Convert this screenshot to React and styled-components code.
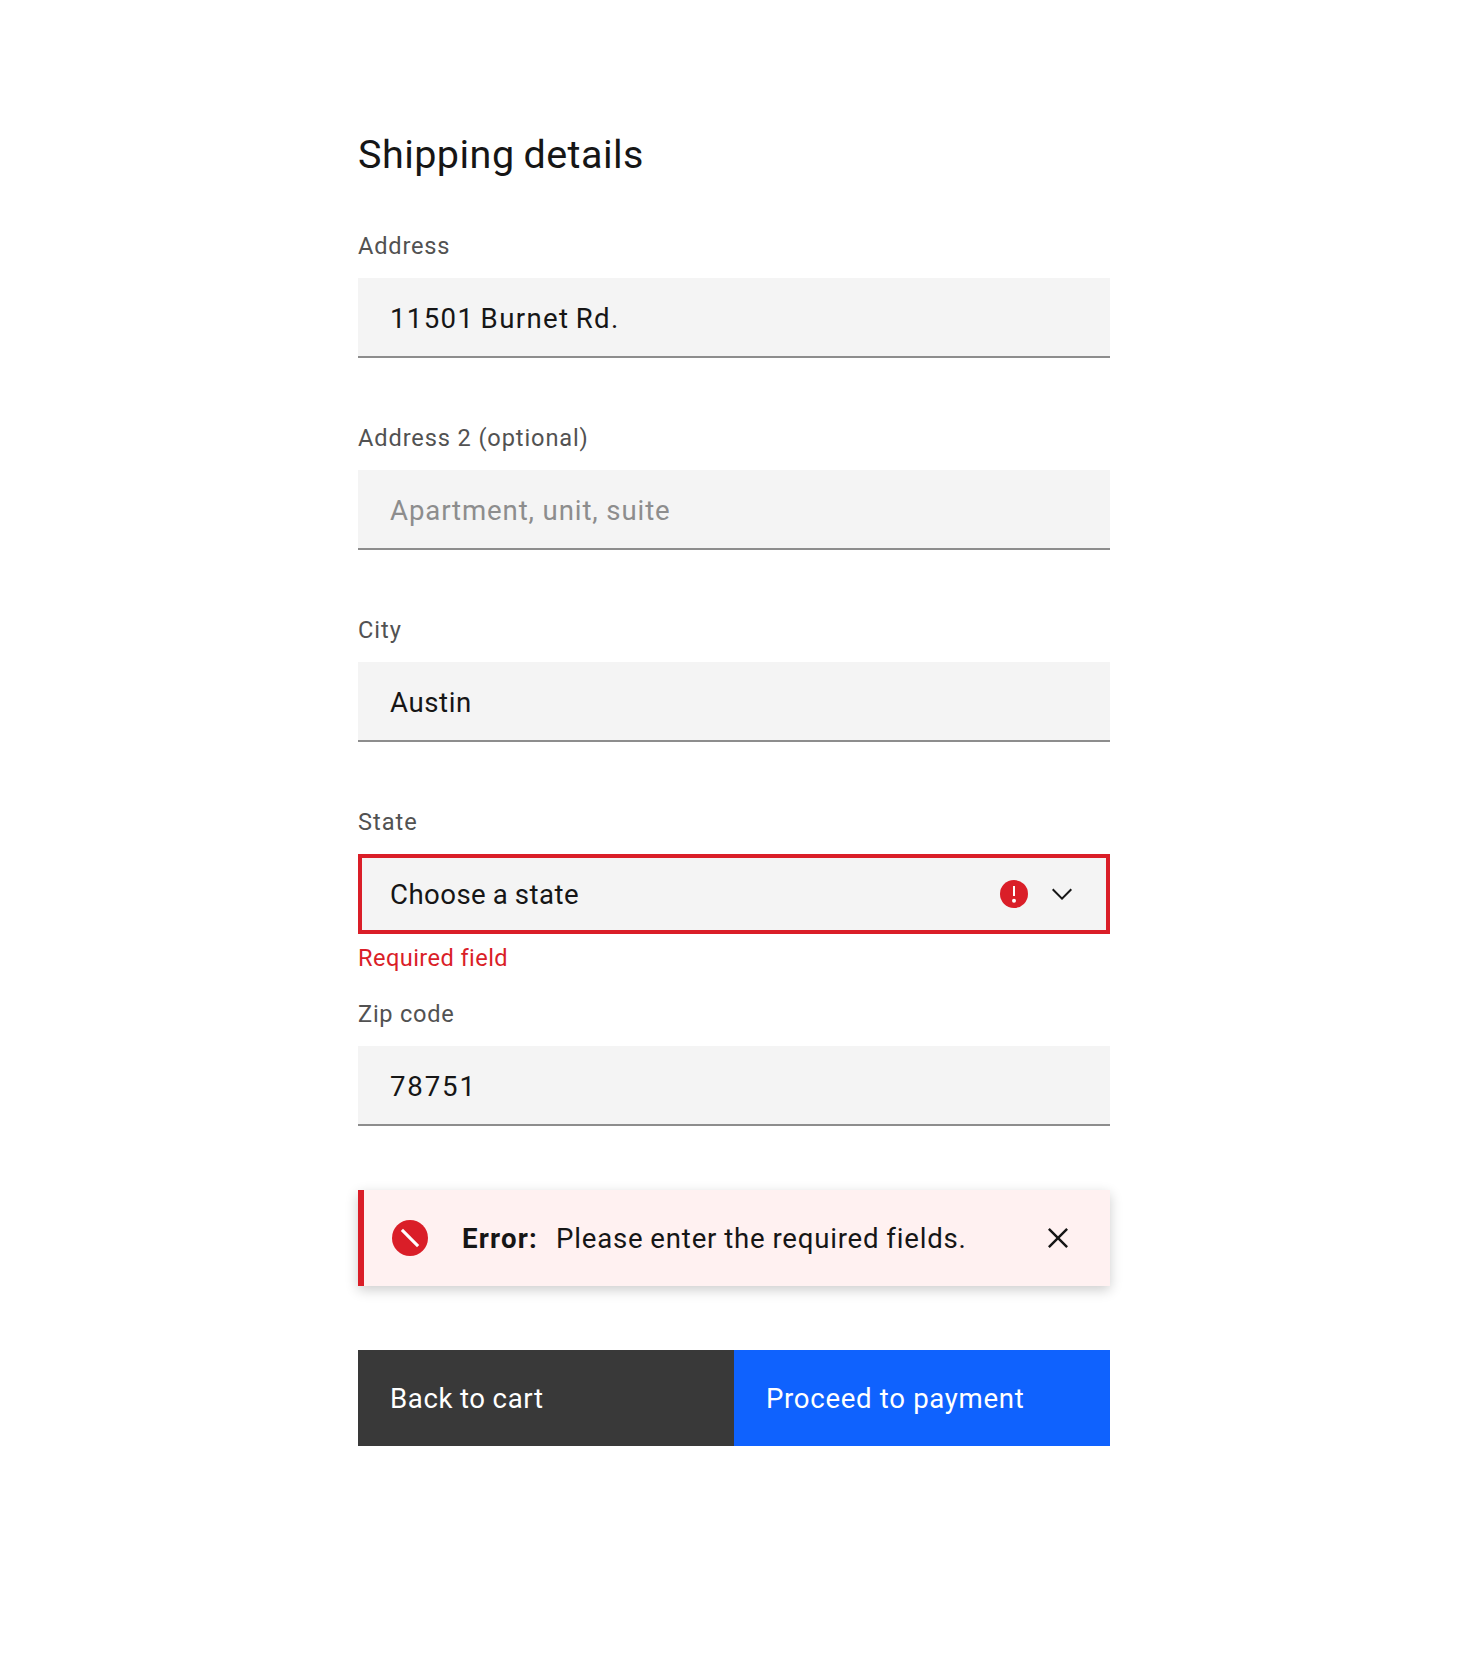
import React from "react";
import styled, { createGlobalStyle } from "styled-components";

const GlobalStyle = createGlobalStyle`
  *, *::before, *::after { box-sizing: border-box; }
  body {
    margin: 0;
    background: #ffffff;
    color: #161616;
    font-family: Roboto, "Liberation Sans", sans-serif;
    font-size: 27.6px;
  }
`;

const Page = styled.main`
  display: flex;
  justify-content: center;
  min-height: 1670px;
  padding: 131px 4px 0 0;
`;

const Form = styled.form`
  display: flex;
  flex-direction: column;
  width: 752px;
`;

const Text = styled.span`
  white-space: nowrap;
  letter-spacing: ${(p) => p.$tracking}px;
  word-spacing: ${(p) => p.$wordSpacing || 0}px;
`;

const Title = styled.h1`
  margin: 0 0 51px;
  font-size: 39.5px;
  font-weight: 400;
  line-height: 48px;
`;

const Field = styled.div`
  display: flex;
  flex-direction: column;
  height: 192px;
`;

const Label = styled.div`
  height: 32px;
  margin-bottom: 16px;
  font-size: 23.6px;
  line-height: 32px;
  color: #525252;
`;

const Control = styled.div`
  display: flex;
  align-items: center;
  height: 80px;
  padding: ${(p) => (p.$invalid ? "1px 28px 0" : "2px 32px 0")};
  background: #f4f4f4;
  border: 0 solid #8d8d8d;
  border-bottom-width: 2px;
  color: ${(p) => (p.$placeholder ? "#8d8d8d" : "#161616")};
  ${(p) => p.$invalid && "border: 4px solid #da1e28;"}
`;

const ControlIcons = styled.div`
  display: flex;
  gap: 16px;
  margin-left: auto;
  margin-top: -1px;
`;

const FieldError = styled.div`
  margin-top: 8px;
  font-size: 23.6px;
  line-height: 32px;
  color: #da1e28;
`;

const Notification = styled.div`
  display: flex;
  align-items: center;
  height: 96px;
  margin-bottom: 64px;
  padding: 0 32px 0 26px;
  border-left: 6px solid #da1e28;
  background: #fff1f1;
  box-shadow: 0 4px 12px rgba(0, 0, 0, 0.2);
`;

const Message = styled.div`
  display: flex;
  gap: 18px;
  margin-left: 32px;
  padding-top: 1px;
`;

const Strong = styled(Text)`
  font-weight: 700;
`;

const CloseIcon = styled.svg`
  margin-left: auto;
`;

const Actions = styled.div`
  display: grid;
  grid-template-columns: 1fr 1fr;
`;

const Button = styled.button`
  height: 96px;
  padding: 1px 32px 0;
  border: 0;
  background: ${(p) => (p.$primary ? "#0f62fe" : "#393939")};
  color: #ffffff;
  font: inherit;
  text-align: left;
`;

const FIELDS = [
  { label: "Address", labelTracking: 0.8, value: "11501 Burnet Rd.", tracking: 1.35, wordSpacing: -1.9 },
  { label: "Address 2 (optional)", labelTracking: 0.88, value: "Apartment, unit, suite", tracking: 0.88 },
  { label: "City", labelTracking: 1, value: "Austin", tracking: 0.6 },
  { label: "State", labelTracking: 1, value: "Choose a state", tracking: 0.45, wordSpacing: -0.7, error: "Required field" },
  { label: "Zip code", labelTracking: 0.75, value: "78751", tracking: 1.85 },
];
FIELDS[1].placeholder = true;

function WarningIcon() {
  return (
    <svg width="32" height="32" viewBox="0 0 32 32">
      <circle cx="16" cy="16" r="14" fill="#da1e28" />
      <path d="M15 8h2v10h-2z" fill="#fff" />
      <circle cx="16" cy="22.8" r="2" fill="#fff" />
    </svg>
  );
}

function ChevronIcon() {
  return (
    <svg width="32" height="32" viewBox="0 0 16 16" fill="#161616">
      <path d="M8 11 3 6l.7-.7L8 9.6l4.3-4.3.7.7z" />
    </svg>
  );
}

function ErrorIcon() {
  return (
    <svg width="40" height="40" viewBox="0 0 20 20">
      <circle cx="10" cy="10" r="9" fill="#da1e28" />
      <path d="M13.5 14.6l-8.1-8.1 1.1-1.1 8.1 8.1z" fill="#fff" />
    </svg>
  );
}

export default function App() {
  return (
    <>
      <GlobalStyle />
      <Page>
        <Form>
          <Title><Text $tracking={0.47} $wordSpacing={-1.4}>Shipping details</Text></Title>
          {FIELDS.map((f) => (
            <Field key={f.label}>
              <Label><Text $tracking={f.labelTracking}>{f.label}</Text></Label>
              <Control $placeholder={f.placeholder} $invalid={!!f.error}>
                <Text $tracking={f.tracking} $wordSpacing={f.wordSpacing}>{f.value}</Text>
                {f.error && (
                  <ControlIcons>
                    <WarningIcon />
                    <ChevronIcon />
                  </ControlIcons>
                )}
              </Control>
              {f.error && <FieldError><Text $tracking={0.42}>{f.error}</Text></FieldError>}
            </Field>
          ))}
          <Notification role="alert">
            <ErrorIcon />
            <Message>
              <Strong $tracking={1.2}>Error:</Strong>
              <Text $tracking={0.8} $wordSpacing={-0.7}>Please enter the required fields.</Text>
            </Message>
            <CloseIcon width="40" height="40" viewBox="0 0 16 16" fill="#161616">
              <path d="M12 4.7 11.3 4 8 7.3 4.7 4 4 4.7 7.3 8 4 11.3l.7.7L8 8.7l3.3 3.3.7-.7L8.7 8z" />
            </CloseIcon>
          </Notification>
          <Actions>
            <Button type="button"><Text $tracking={0.6} $wordSpacing={-0.5}>Back to cart</Text></Button>
            <Button type="button" $primary><Text $tracking={0.68}>Proceed to payment</Text></Button>
          </Actions>
        </Form>
      </Page>
    </>
  );
}
